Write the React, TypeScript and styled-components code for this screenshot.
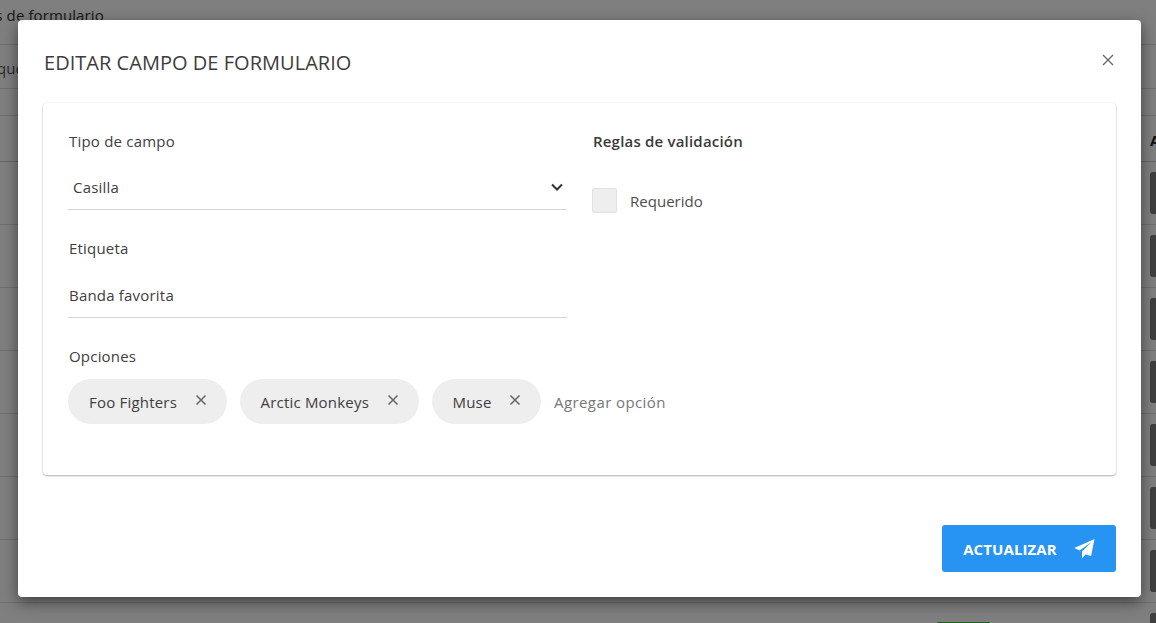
import React from "react";
import styled, { createGlobalStyle } from "styled-components";

const Global = createGlobalStyle`
  html, body { margin: 0; padding: 0; height: 100%; overflow: hidden; background: #fff; }
  body { font-family: "Open Sans", "Noto Sans", sans-serif; color: #3f3f3f; }
`;

const Page = styled.div`
  width: 1156px;
  height: 623px;
  overflow: hidden;
  position: relative;
  background: #fff;
`;
const TopBar = styled.div`
  height: 45px;
  box-sizing: border-box;
  border-bottom: 1px solid #dedede;
  font-size: 15px;
  line-height: 31px;
  letter-spacing: 0.1px;
  white-space: nowrap;
  color: #333;
  text-indent: -55px;
`;
const SearchBar = styled.div`
  height: 44px;
  box-sizing: border-box;
  border-bottom: 1px solid #dedede;
  font-size: 15px;
  line-height: 46px;
  white-space: nowrap;
  text-indent: -29px;
  color: #555;
`;
const Spacer = styled.div`
  height: 27px;
  box-sizing: border-box;
  border-bottom: 1px solid #dedede;
`;
const HeadRow = styled.div`
  height: 46px;
  box-sizing: border-box;
  border-bottom: 1px solid #cfcfcf;
  line-height: 48px;
  font-size: 15px;
  font-weight: 700;
  padding-left: 1150px;
  white-space: nowrap;
  color: #222;
`;
const Row = styled.div`
  height: 63px;
  box-sizing: border-box;
  border-bottom: 1px solid #dedede;
  padding: 10px 0 0 1150px;
  position: relative;
`;
const DarkBtn = styled.div`
  width: 60px;
  height: 42px;
  background: #7e7e7e;
  border-radius: 3px;
`;
const Badge = styled.div`
  position: absolute;
  left: 936px;
  top: 19px;
  width: 55px;
  height: 24px;
  background: #46b449;
  border-radius: 3px;
`;

const Scrim = styled.div`
  position: absolute;
  inset: 0;
  background: rgba(0, 0, 0, 0.5);
`;
const Modal = styled.div`
  position: absolute;
  left: 18px;
  top: 20px;
  width: 1123px;
  height: 577px;
  box-sizing: border-box;
  background: #fff;
  border-radius: 4px;
  box-shadow: 0 5px 15px rgba(0, 0, 0, 0.5);
  padding: 0 25px 25px 25px;
  display: flex;
  flex-direction: column;
`;
const ModalHead = styled.div`
  height: 83px;
  display: flex;
  align-items: flex-start;
  justify-content: space-between;
`;
const Title = styled.h2`
  margin: 28px 0 0 1px;
  font-size: 20px;
  line-height: 30px;
  font-weight: 400;
  color: #3d3d3d;
  letter-spacing: 0.03px;
`;
const Close = styled.button`
  border: 0;
  background: none;
  padding: 0;
  margin: 34px 2px 0 0;
  width: 12px;
  height: 12px;
  color: #666;
  display: flex;
`;
const Card = styled.div`
  height: 372px;
  box-sizing: border-box;
  border-radius: 4px;
  background: #fff;
  box-shadow: 0 1px 2px rgba(0, 0, 0, 0.3), 0 0 2px rgba(0, 0, 0, 0.08);
  padding: 24px 25px 0 25px;
  display: grid;
  grid-template-columns: 499px 1fr;
  column-gap: 25px;
  grid-template-rows: 215px 1fr;
  letter-spacing: 0.2px;
`;
const Column = styled.div`
  display: flex;
  flex-direction: column;
`;
const Label = styled.div`
  font-size: 15px;
  line-height: 28px;
  padding-left: 1px;
  color: #404040;
  height: 28px;
`;
const Field = styled.div<{ $indent: number; $height: number }>`
  height: ${(p) => p.$height}px;
  margin-bottom: 24px;
  box-sizing: border-box;
  border-bottom: 1px solid #d6d6d6;
  display: flex;
  align-items: flex-end;
  justify-content: space-between;
  font-size: 15px;
  line-height: 20px;
  color: #404040;
  padding: 0 3px 12px ${(p) => p.$indent}px;
`;
const Chevron = styled.svg`
  width: 14px;
  height: 14px;
  margin-bottom: 3px;
`;
const RuleTitle = styled.div`
  font-size: 15px;
  font-weight: 600;
  line-height: 28px;
  margin-left: 1px;
  color: #3a3a3a;
`;
const CheckRow = styled.label`
  display: flex;
  align-items: center;
  gap: 13px;
  margin-top: 33px;
  font-size: 15px;
  letter-spacing: 0.02px;
  color: #4d4d4d;
`;
const CheckBox = styled.span`
  width: 25px;
  height: 25px;
  box-sizing: border-box;
  background: #eeeeee;
  border: 1px solid #e2e2e2;
  border-radius: 2px;
`;
const OptionsArea = styled.div`
  grid-column: 1 / span 2;
  display: flex;
  flex-direction: column;
`;
const TagRow = styled.div`
  display: flex;
  align-items: center;
  gap: 13px;
  margin-top: 9px;
`;
const Tag = styled.div`
  height: 45px;
  padding: 0 20px 0 21px;
  border-radius: 23px;
  background: #eeeeee;
  display: flex;
  align-items: center;
  gap: 17.5px;
  font-size: 15px;
  color: #404040;
`;
const TagX = styled.svg`
  width: 12px;
  height: 12px;
  margin-bottom: 3px;
  color: #666;
`;
const AddOption = styled.span`
  font-size: 15px;
  letter-spacing: 0.4px;
  color: #777;
`;
const Footer = styled.div`
  margin-top: auto;
  display: flex;
  justify-content: flex-end;
`;
const Submit = styled.button`
  width: 174px;
  height: 47px;
  border: 0;
  border-radius: 3px;
  background: #2793f2;
  color: #fff;
  font-family: inherit;
  font-size: 15px;
  font-weight: 700;
  letter-spacing: 0.1px;
  display: flex;
  align-items: center;
  justify-content: center;
  gap: 17px;
`;
const Plane = styled.svg`
  width: 21px;
  height: 20px;
  margin-bottom: -1px;
  fill: #fff;
`;

const Tags = ["Foo Fighters", "Arctic Monkeys", "Muse"];

export default function App() {
  return (
    <Page>
      <Global />
      <TopBar>Campos de formulario</TopBar>
      <SearchBar>Búsqueda</SearchBar>
      <Spacer />
      <HeadRow>Acciones</HeadRow>
      {[0, 1, 2, 3, 4, 5, 6].map((i) => (
        <Row key={i}>
          <DarkBtn />
        </Row>
      ))}
      <Row>
        <Badge />
        <DarkBtn />
      </Row>
      <Scrim />
      <Modal>
        <ModalHead>
          <Title>EDITAR CAMPO DE FORMULARIO</Title>
          <Close aria-label="Cerrar">
            <svg viewBox="0 0 12 12" width="12" height="12" fill="none" stroke="currentColor" strokeWidth="1.3">
              <path d="M1 1 11 11M11 1 1 11" />
            </svg>
          </Close>
        </ModalHead>
        <Card>
          <Column>
            <Label>Tipo de campo</Label>
            <Field $indent={5} $height={55}>
              Casilla
              <Chevron viewBox="0 0 14 14" fill="none" stroke="#333" strokeWidth="2">
                <path d="M2 4.5 7 9.5 12 4.5" />
              </Chevron>
            </Field>
            <Label>Etiqueta</Label>
            <Field $indent={1} $height={56}>Banda favorita</Field>
          </Column>
          <Column>
            <RuleTitle>Reglas de validación</RuleTitle>
            <CheckRow>
              <CheckBox />
              Requerido
            </CheckRow>
          </Column>
          <OptionsArea>
            <Label>Opciones</Label>
            <TagRow>
              {Tags.map((t) => (
                <Tag key={t}>
                  {t}
                  <TagX viewBox="0 0 12 12" fill="none" stroke="currentColor" strokeWidth="1.5">
                    <path d="M1.5 1.5 10.5 10.5M10.5 1.5 1.5 10.5" />
                  </TagX>
                </Tag>
              ))}
              <AddOption>Agregar opción</AddOption>
            </TagRow>
          </OptionsArea>
        </Card>
        <Footer>
          <Submit>
            ACTUALIZAR
            <Plane viewBox="0 0 21 20">
              <path d="M20.5 0 .3 9l5.3 2.4L17.5 3 8 12.6V19.6l3.4-4 5.7 1.5z" />
            </Plane>
          </Submit>
        </Footer>
      </Modal>
    </Page>
  );
}
